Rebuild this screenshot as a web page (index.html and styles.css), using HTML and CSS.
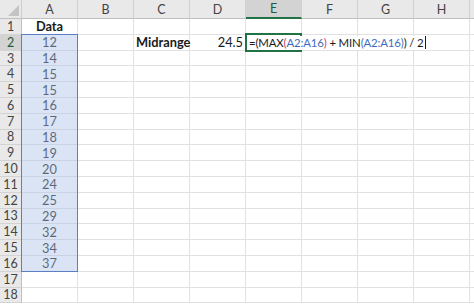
FILE: index.html
```html
<!DOCTYPE html>
<html>
<head>
<meta charset="utf-8">
<link rel="stylesheet" href="styles.css">
</head>
<body>
<div class="wrap">
<div class="sheet">
  <div class="corner"><span class="tri"></span></div>
  <div class="ch">A</div><div class="ch">B</div><div class="ch">C</div><div class="ch">D</div><div class="ch ch-on">E</div><div class="ch">F</div><div class="ch">G</div><div class="ch">H</div><div class="ch"></div>

  <div class="rh">1</div><div class="c ctr b">Data</div><div class="c"></div><div class="c"></div><div class="c"></div><div class="c"></div><div class="c"></div><div class="c"></div><div class="c"></div><div class="c"></div>
  <div class="rh rh-on">2</div><div class="c ctr">12</div><div class="c"></div><div class="c b">Midrange</div><div class="c rt">24.5</div><div class="c"></div><div class="c"></div><div class="c"></div><div class="c"></div><div class="c"></div>
  <div class="rh">3</div><div class="c ctr">14</div><div class="c"></div><div class="c"></div><div class="c"></div><div class="c"></div><div class="c"></div><div class="c"></div><div class="c"></div><div class="c"></div>
  <div class="rh">4</div><div class="c ctr">15</div><div class="c"></div><div class="c"></div><div class="c"></div><div class="c"></div><div class="c"></div><div class="c"></div><div class="c"></div><div class="c"></div>
  <div class="rh">5</div><div class="c ctr">15</div><div class="c"></div><div class="c"></div><div class="c"></div><div class="c"></div><div class="c"></div><div class="c"></div><div class="c"></div><div class="c"></div>
  <div class="rh">6</div><div class="c ctr">16</div><div class="c"></div><div class="c"></div><div class="c"></div><div class="c"></div><div class="c"></div><div class="c"></div><div class="c"></div><div class="c"></div>
  <div class="rh">7</div><div class="c ctr">17</div><div class="c"></div><div class="c"></div><div class="c"></div><div class="c"></div><div class="c"></div><div class="c"></div><div class="c"></div><div class="c"></div>
  <div class="rh">8</div><div class="c ctr">18</div><div class="c"></div><div class="c"></div><div class="c"></div><div class="c"></div><div class="c"></div><div class="c"></div><div class="c"></div><div class="c"></div>
  <div class="rh">9</div><div class="c ctr">19</div><div class="c"></div><div class="c"></div><div class="c"></div><div class="c"></div><div class="c"></div><div class="c"></div><div class="c"></div><div class="c"></div>
  <div class="rh">10</div><div class="c ctr">20</div><div class="c"></div><div class="c"></div><div class="c"></div><div class="c"></div><div class="c"></div><div class="c"></div><div class="c"></div><div class="c"></div>
  <div class="rh">11</div><div class="c ctr">24</div><div class="c"></div><div class="c"></div><div class="c"></div><div class="c"></div><div class="c"></div><div class="c"></div><div class="c"></div><div class="c"></div>
  <div class="rh">12</div><div class="c ctr">25</div><div class="c"></div><div class="c"></div><div class="c"></div><div class="c"></div><div class="c"></div><div class="c"></div><div class="c"></div><div class="c"></div>
  <div class="rh">13</div><div class="c ctr">29</div><div class="c"></div><div class="c"></div><div class="c"></div><div class="c"></div><div class="c"></div><div class="c"></div><div class="c"></div><div class="c"></div>
  <div class="rh">14</div><div class="c ctr">32</div><div class="c"></div><div class="c"></div><div class="c"></div><div class="c"></div><div class="c"></div><div class="c"></div><div class="c"></div><div class="c"></div>
  <div class="rh">15</div><div class="c ctr">34</div><div class="c"></div><div class="c"></div><div class="c"></div><div class="c"></div><div class="c"></div><div class="c"></div><div class="c"></div><div class="c"></div>
  <div class="rh">16</div><div class="c ctr">37</div><div class="c"></div><div class="c"></div><div class="c"></div><div class="c"></div><div class="c"></div><div class="c"></div><div class="c"></div><div class="c"></div>
  <div class="rh">17</div><div class="c"></div><div class="c"></div><div class="c"></div><div class="c"></div><div class="c"></div><div class="c"></div><div class="c"></div><div class="c"></div><div class="c"></div>
  <div class="rh">18</div><div class="c"></div><div class="c"></div><div class="c"></div><div class="c"></div><div class="c"></div><div class="c"></div><div class="c"></div><div class="c"></div><div class="c"></div>
</div>
<div class="layer">
  <div class="range"></div>
  <div class="active"></div>
  <div class="formula">=(MAX<span class="p1">(</span><span class="ref">A2:A16</span><span class="p1">)</span>&nbsp;+ MIN<span class="p2">(</span><span class="ref">A2:A16</span><span class="p2">)</span>) / 2<span class="caret"></span></div>
</div>
</div>
</body>
</html>
```

FILE: styles.css
```css
html, body {
  margin: 0;
  padding: 0;
  background: #ffffff;
}

.wrap {
  display: grid;
  width: 474px;
  height: 306px;
  overflow: hidden;
  font-family: Lato, "Open Sans", "Liberation Sans", sans-serif;
  font-size: 12.8px;
  color: #1a1a1a;
}

.sheet,
.layer {
  grid-area: 1 / 1;
  display: grid;
  grid-template-columns: 22px repeat(8, 56px) 1fr;
  grid-template-rows: 19px repeat(18, 15.8px);
}

.layer {
  pointer-events: none;
}

.corner {
  background: #e9e9e9;
  border-right: 1px solid #cfcfcf;
  border-bottom: 1px solid #bfbfbf;
  display: flex;
  align-items: flex-end;
  justify-content: flex-end;
  padding: 0 2px 2px 0;
}

.tri {
  width: 0;
  height: 0;
  border-left: 11px solid transparent;
  border-bottom: 11px solid #c4c4c4;
}

.ch {
  background: #e9e9e9;
  border-right: 1px solid #d0d0d0;
  border-bottom: 1px solid #bfbfbf;
  display: flex;
  align-items: center;
  justify-content: center;
  color: #444444;
  font-size: 12.5px;
}

.ch-on {
  background: #d3d3d3;
  border-bottom: 2px solid #217346;
  color: #1e5d3a;
}

.rh {
  background: #e9e9e9;
  border-right: 1px solid #bfbfbf;
  border-bottom: 1px solid #d3d3d3;
  display: flex;
  align-items: center;
  justify-content: center;
  color: #444444;
  font-size: 12.5px;
}

.rh-on {
  background: #d3d3d3;
  color: #1e5d3a;
}

.c {
  border-right: 1px solid #e1e1e1;
  border-bottom: 1px solid #e1e1e1;
  display: flex;
  align-items: center;
  padding: 0 2px;
  white-space: nowrap;
  min-width: 0;
}

.ctr { justify-content: center; }
.rt { justify-content: flex-end; }
.b { font-weight: 700; }

.range {
  grid-column: 2;
  grid-row: 3 / 18;
  background: rgba(172, 195, 232, 0.45);
  border: 1px solid #5a7fc4;
  margin: -1px 0 0 -1px;
}

.active {
  grid-column: 6;
  grid-row: 3;
  border: 2px solid #217346;
  margin: -2px 0 -1px -1px;
  z-index: 2;
}

.formula {
  grid-column: 6 / 11;
  grid-row: 3;
  justify-self: start;
  align-self: stretch;
  display: flex;
  align-items: center;
  background: #ffffff;
  margin: 1px 0 1px 2px;
  padding: 0 0 0 1px;
  white-space: nowrap;
  z-index: 3;
  font-size: 11.4px;
  letter-spacing: -0.15px;
  color: #1a1a1a;
}

.ref { color: #3f6cc0; }
.p1 { color: #d4405a; }
.p2 { color: #4a6fc4; }

.caret {
  display: inline-block;
  width: 1px;
  height: 13px;
  background: #1a1a1a;
  margin-left: 1px;
}
```
